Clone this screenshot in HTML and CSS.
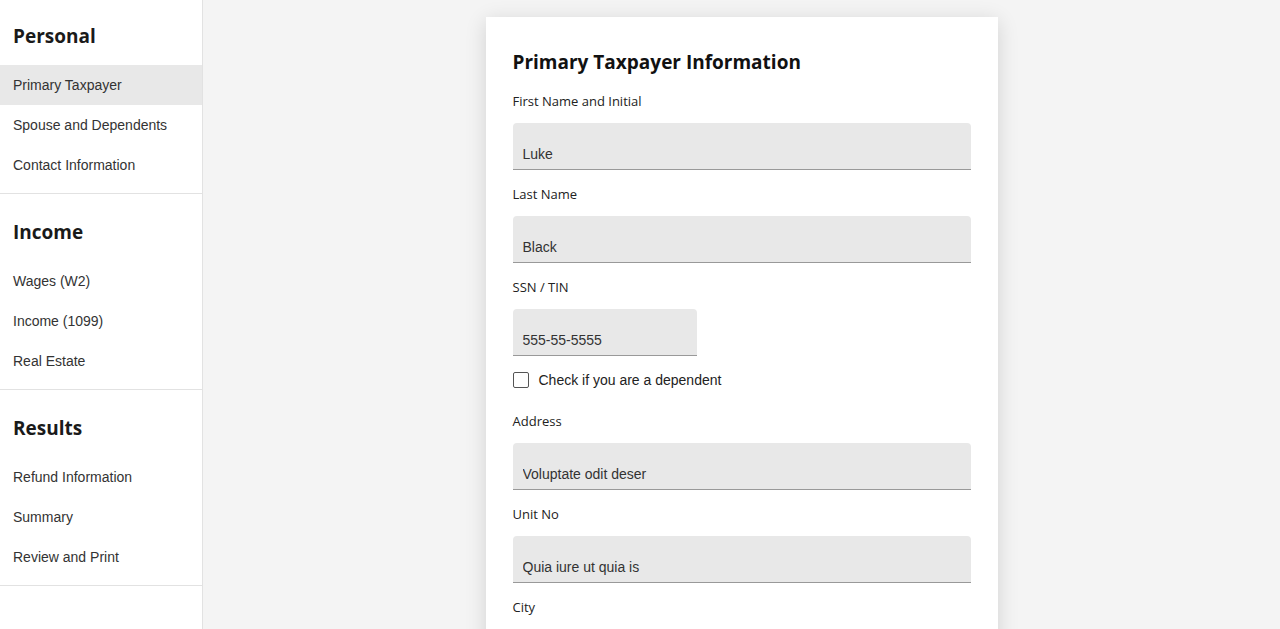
FILE: index.html
```html
<!DOCTYPE html>
<html lang="en">
<head>
	<meta charset="UTF-8">
	<title>Primary Taxpayer</title>
	<link rel="stylesheet" href="styles.css">
</head>
<body>
	<div class="page">
		<div class="sidebar">
			<div class="section">
				<h2>Personal</h2>
				<a href="javascript:;" class="item on">Primary Taxpayer</a>
				<a href="javascript:;" class="item">Spouse and Dependents</a>
				<a href="javascript:;" class="item">Contact Information</a>
			</div>
			<div class="section">
				<h2>Income</h2>
				<a href="javascript:;" class="item">Wages (W2)</a>
				<a href="javascript:;" class="item">Income (1099)</a>
				<a href="javascript:;" class="item">Real Estate</a>
			</div>
			<div class="section">
				<h2>Results</h2>
				<a href="javascript:;" class="item">Refund Information</a>
				<a href="javascript:;" class="item">Summary</a>
				<a href="javascript:;" class="item">Review and Print</a>
			</div>
		</div>
		<div class="main">
			<div class="card">
				<h1>Primary Taxpayer Information</h1>
				<div class="field">
					<label>First Name and Initial</label>
					<input type="text" value="Luke">
				</div>
				<div class="field">
					<label>Last Name</label>
					<input type="text" value="Black">
				</div>
				<div class="field">
					<label>SSN / TIN</label>
					<input type="text" class="short" value="555-55-5555">
				</div>
				<label class="check"><input type="checkbox"> Check if you are a dependent</label>
				<div class="field">
					<label>Address</label>
					<input type="text" value="Voluptate odit deser">
				</div>
				<div class="field">
					<label>Unit No</label>
					<input type="text" value="Quia iure ut quia is">
				</div>
				<div class="field">
					<label>City</label>
					<input type="text" value="">
				</div>
			</div>
		</div>
	</div>
</body>
</html>
```

FILE: styles.css
```css
*{
	margin: 0;
	padding: 0;
	box-sizing: border-box;
	text-decoration: none;
}
body{
	font-family: "Liberation Sans", Arial, sans-serif;
	color: #333;
	background: #f4f4f4;
	overflow: hidden;
}
.page{
	display: flex;
	height: 629px;
}
.sidebar{
	width: 203px;
	flex-shrink: 0;
	background: #fff;
	border-right: 1px solid #e2e2e2;
}
.section{
	padding-bottom: 8px;
	border-bottom: 1px solid #e2e2e2;
}
.section + .section{
	padding-top: 2px;
}
.section h2{
	font-family: "Open Sans", sans-serif;
	font-size: 19px;
	font-weight: 700;
	color: #1a1a1a;
	height: 65px;
	line-height: 72px;
	padding-left: 13px;
}
.item{
	display: block;
	height: 40px;
	line-height: 41px;
	padding-left: 13px;
	font-size: 14px;
	color: #333;
}
.item.on{
	background: #e8e8e8;
}
.main{
	flex: 1;
	display: flex;
	justify-content: center;
	padding-top: 17px;
}
.card{
	width: 512px;
	background: #fff;
	padding: 31px 27px 0;
	box-shadow: 0 4px 20px rgba(0,0,0,.14);
	align-self: flex-start;
	min-height: 640px;
}
.card h1{
	font-family: "Open Sans", sans-serif;
	font-size: 19px;
	font-weight: 700;
	color: #111;
	line-height: 28px;
	margin-bottom: 15px;
}
.field label{
	display: block;
	font-family: "Open Sans", sans-serif;
	font-size: 13px;
	line-height: 20px;
	color: #222;
	margin-bottom: 12px;
}
.field input{
	display: block;
	width: 100%;
	height: 47px;
	border: none;
	border-bottom: 1px solid #999;
	border-radius: 4px 4px 0 0;
	background: #e8e8e8;
	padding: 16px 10px 0;
	font-family: "Liberation Sans", Arial, sans-serif;
	font-size: 14px;
	color: #333;
	outline: none;
}
.field input.short{
	width: 184px;
}
.field{
	margin-bottom: 14px;
}
.check{
	display: flex;
	align-items: center;
	gap: 10px;
	height: 20px;
	margin-top: 1px;
	margin-bottom: 21px;
	font-size: 14px;
	color: #222;
}
.check input{
	appearance: none;
	width: 16px;
	height: 16px;
	border: 1.5px solid #555;
	border-radius: 2px;
	background: #fff;
}
```
